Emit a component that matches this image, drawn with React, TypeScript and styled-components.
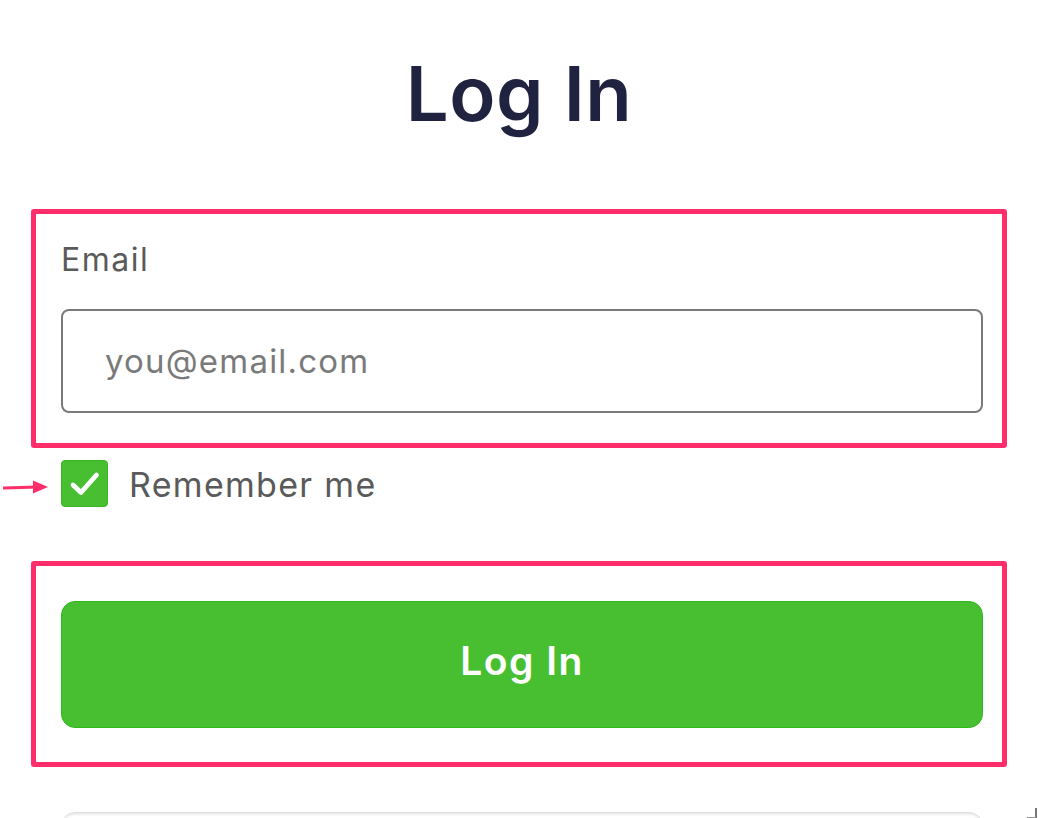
import { FC } from 'react';
import styled, { createGlobalStyle } from 'styled-components';

const pink = '#ff2d6a';
const green = '#48bf31';

const GlobalStyle = createGlobalStyle`
  html, body {
    margin: 0;
    padding: 0;
    background: #ffffff;
    font-family: 'Inter', 'Open Sans', sans-serif;
  }
  * {
    box-sizing: border-box;
  }
`;

const Page = styled.div`
  position: relative;
  width: 1039px;
  height: 818px;
  overflow: hidden;
  padding: 52px 0 0 31px;
`;

const Title = styled.h1`
  margin: 0 0 75px;
  width: 976px;
  text-align: center;
  font-size: 76px;
  font-weight: 600;
  color: #1f2340;
  line-height: 82px;
  letter-spacing: 0.5px;
`;

const Highlight = styled.div<{ $top: number; $bottom: number }>`
  width: 976px;
  border: 5px solid ${pink};
  border-radius: 3px;
  padding: ${(p) => p.$top}px 19px ${(p) => p.$bottom}px 25px;
`;

const Label = styled.label`
  display: block;
  font-size: 32px;
  line-height: 38px;
  color: #5a5a5a;
  letter-spacing: 1.5px;
  margin-bottom: 30px;
`;

const Input = styled.input`
  display: block;
  width: 922px;
  height: 104px;
  border: 2px solid #7a7a7a;
  border-radius: 8px;
  padding: 0 0 0 42px;
  font-family: inherit;
  font-size: 33px;
  letter-spacing: 1.2px;
  color: #333;
  outline: none;
  &::placeholder {
    color: #7a7a7a;
  }
`;

const CheckRow = styled.div`
  position: relative;
  display: flex;
  align-items: center;
  gap: 21px;
  margin: 12px 0 54px 30px;
  height: 47px;
`;

const Box = styled.span`
  width: 47px;
  height: 47px;
  border-radius: 4px;
  background: ${green};
  border: 1px solid #3ab523;
  display: flex;
  align-items: center;
  justify-content: center;
`;

const RememberText = styled.span`
  font-size: 34px;
  color: #5a5a5a;
  line-height: 40px;
  letter-spacing: 1.3px;
  padding-top: 3px;
`;

const Arrow = styled.svg`
  position: absolute;
  left: -58px;
  top: 19px;
`;

const Button = styled.button`
  display: flex;
  align-items: center;
  justify-content: center;
  width: 922px;
  height: 127px;
  padding: 0 0 8px;
  border-radius: 14px;
  border: 1px solid #2fba1c;
  background: ${green};
  color: #ffffff;
  font-family: inherit;
  font-size: 39px;
  font-weight: 600;
  letter-spacing: 1.5px;
`;

const NextCard = styled.div`
  margin: 45px 0 0 30px;
  width: 922px;
  height: 40px;
  border: 1px solid #dcdcdc;
  border-radius: 14px;
  box-shadow: inset 0 2px 2px rgba(0, 0, 0, 0.08);
`;

const CornerMark = styled.span`
  position: absolute;
  right: 2px;
  bottom: 0;
  width: 10px;
  height: 10px;
  border-right: 2px solid #777;
  border-bottom: 1px solid #999;
`;

const Check = () => (
  <svg width="32" height="28" viewBox="0 0 32 28">
    <path d="M4 15 L12 22.5 L27.5 5" fill="none" stroke="#fff" strokeWidth="4.8" strokeLinecap="round" strokeLinejoin="round" />
  </svg>
);

const App: FC = () => (
  <Page>
    <GlobalStyle />
    <Title>Log In</Title>
    <Highlight $top={27} $bottom={30}>
      <Label htmlFor="email">Email</Label>
      <Input id="email" type="email" placeholder="you@email.com" />
    </Highlight>
    <CheckRow>
      <Arrow width="46" height="16" viewBox="0 0 46 16">
        <path d="M1 9 L34 8" stroke={pink} strokeWidth="3" strokeLinecap="round" />
        <path d="M30 1.5 L45 8 L30 14.5 Z" fill={pink} strokeLinejoin="round" />
      </Arrow>
      <Box>
        <Check />
      </Box>
      <RememberText>Remember me</RememberText>
    </CheckRow>
    <Highlight $top={35} $bottom={34}>
      <Button>Log In</Button>
    </Highlight>
    <NextCard />
    <CornerMark />
  </Page>
);

export default App;
